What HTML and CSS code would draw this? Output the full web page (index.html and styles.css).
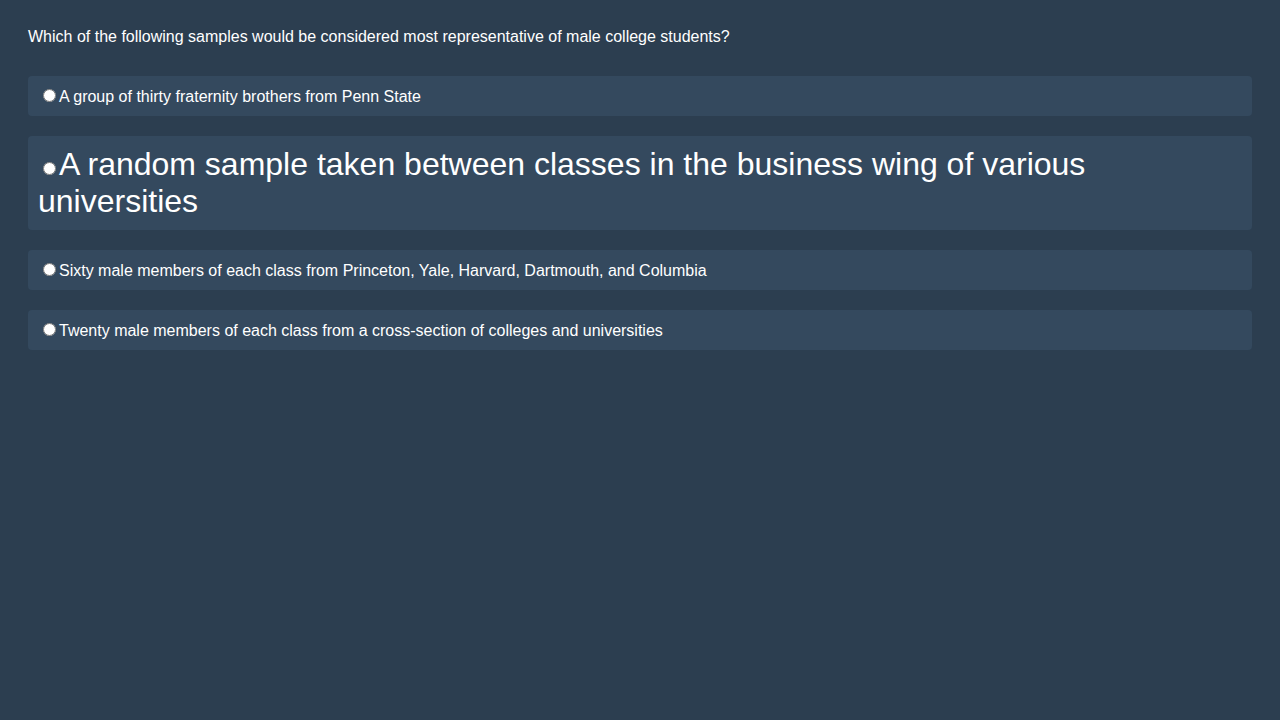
FILE: index.html
```html
<!DOCTYPE html>
<html>
<head>
<meta charset="utf-8">
<link rel="stylesheet" href="styles.css">
</head>
<body>
<div class="quiz">
  <div class="question">Which of the following samples would be considered most representative of male college students?</div>
  <div class="options">
    <label class="option"><input type="radio" name="q">A group of thirty fraternity brothers from Penn State</label>
    <label class="option big"><input type="radio" name="q">A random sample taken between classes in the business wing of various universities</label>
    <label class="option"><input type="radio" name="q">Sixty male members of each class from Princeton, Yale, Harvard, Dartmouth, and Columbia</label>
    <label class="option"><input type="radio" name="q">Twenty male members of each class from a cross-section of colleges and universities</label>
  </div>
</div>
</body>
</html>
```
FILE: styles.css
```css
html, body {
  background: #2c3e50;
}
body {
  margin: 8px;
  font-family: "Liberation Sans", Arial, sans-serif;
  font-size: 16px;
  color: #ffffff;
}
.quiz {
  padding: 20px;
}
.question {
  margin-bottom: 30px;
}
.options {
  display: flex;
  flex-direction: column;
  gap: 20px;
}
.option {
  display: block;
  background: #34495e;
  border-radius: 4px;
  padding: 10px;
  color: #ffffff;
}
.option.big {
  font-size: 32px;
}
.option input {
  margin: 3px 3px 0 5px;
}
```
